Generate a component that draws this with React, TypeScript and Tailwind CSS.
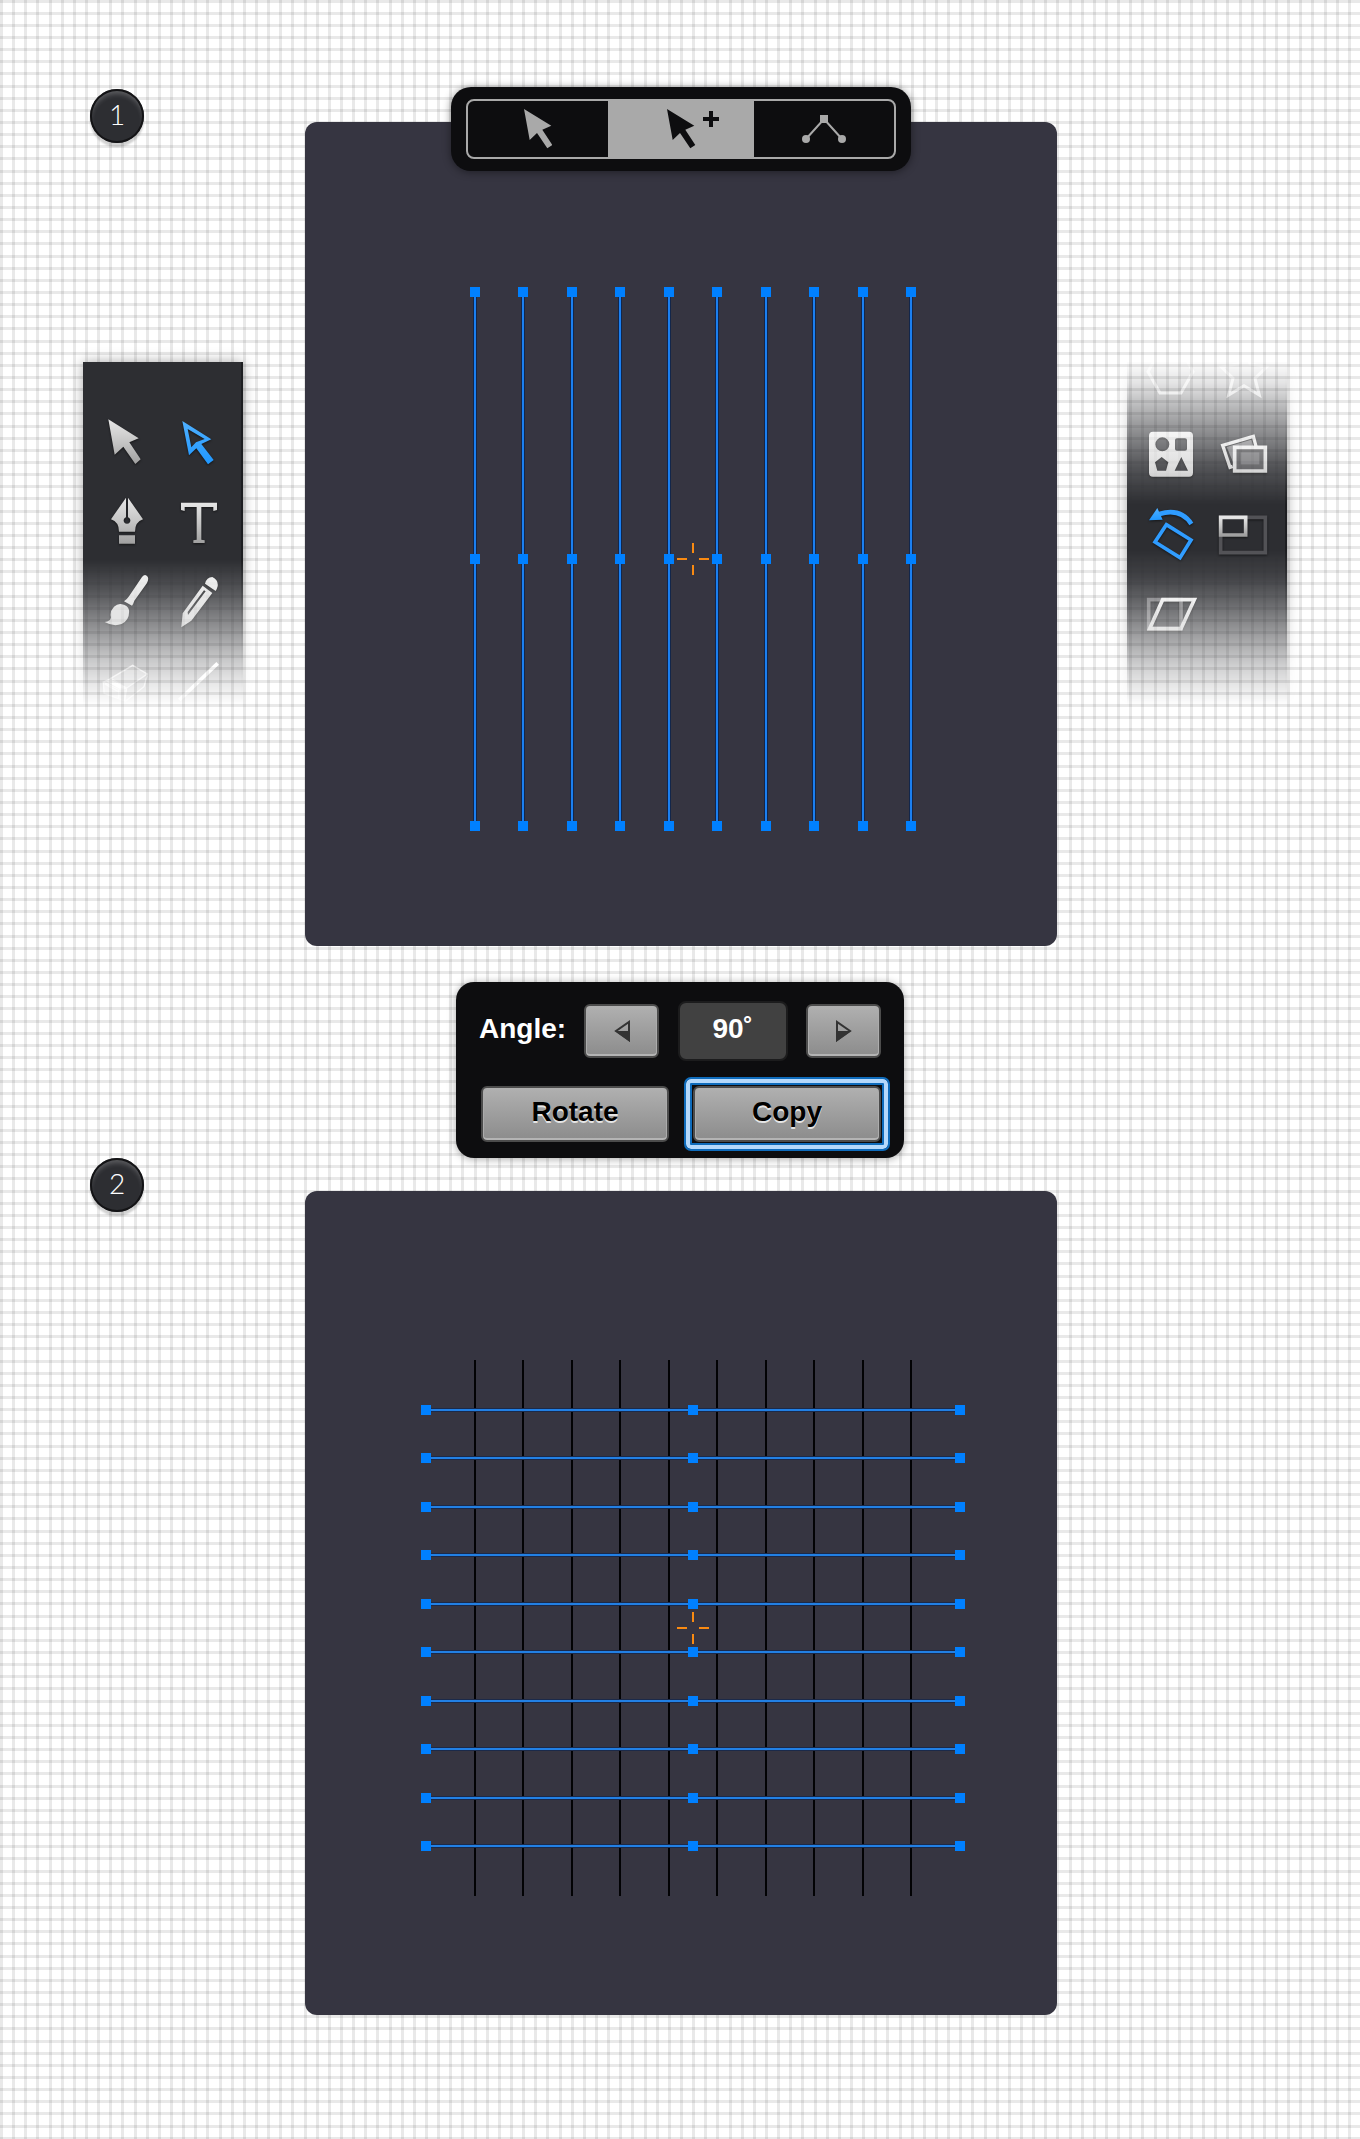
import React from "react";

const GREY = "url(#metal)";
const BLUE = "url(#azure)";

/* Evenly spaced strokes of the artwork, relative to a 752 x 824 artboard. */
const CENTER = { x: 388, y: 437 };
const OFFSETS = [-218, -170, -121, -73, -24, 24, 73, 121, 170, 218];
const HALF = 267;

function SharedGradients() {
  return (
    <svg width="0" height="0" className="absolute" aria-hidden="true">
      <defs>
        <linearGradient id="metal" x1="0" y1="0" x2="0" y2="1">
          <stop offset="0" stopColor="#e6e6e6" />
          <stop offset="0.5" stopColor="#c6c6c6" />
          <stop offset="1" stopColor="#a0a0a0" />
        </linearGradient>
        <linearGradient id="silver" x1="0" y1="0" x2="0" y2="1">
          <stop offset="0" stopColor="#ededed" />
          <stop offset="1" stopColor="#cfcfcf" />
        </linearGradient>
        <linearGradient id="azure" x1="0" y1="0" x2="0" y2="1">
          <stop offset="0" stopColor="#4fb0ff" />
          <stop offset="1" stopColor="#1f97ff" />
        </linearGradient>
      </defs>
    </svg>
  );
}

function Tool({ label, viewBox, children }: { label: string; viewBox: string; children: React.ReactNode }) {
  return (
    <button type="button" aria-label={label} className="block h-20">
      <svg
        viewBox={viewBox}
        className="h-20 w-[74px] drop-shadow-[0_1px_1px_rgba(0,0,0,0.55)]"
        fill="none"
        aria-hidden="true"
      >
        {children}
      </svg>
    </button>
  );
}

function LeftTools() {
  return (
    <aside
      aria-label="Drawing tools"
      className="w-48 px-4 pt-4 [mask-image:linear-gradient(to_bottom,#000_214px,rgba(0,0,0,.82)_244px,rgba(0,0,0,.58)_274px,rgba(0,0,0,.42)_294px,rgba(0,0,0,.26)_314px,rgba(0,0,0,.13)_334px,transparent_360px)]"
    >
      <div className="h-[344px] bg-[#2d2e32] shadow-[0_0_12px_rgba(0,0,0,0.35),inset_-2px_0_0_#1d1e21]">
        <div className="grid h-full grid-cols-[74px_74px] content-start overflow-hidden pt-10 pl-1">
          <Tool label="Selection" viewBox="51 156 222 240">
            <path fill={GREY} d="M115 208L206 265L178 277L212 328L196 342L160 290L134 314Z" />
          </Tool>
          <Tool label="Direct selection" viewBox="273 156 222 240">
            <path
              fill={BLUE}
              fillRule="evenodd"
              d="M337 213L424 268L394 282L431 330L414 343L379 295L357 316ZM353 237L404 267L378 277L364 292Z"
            />
          </Tool>
          <Tool label="Pen" viewBox="21 -24 222 240">
            <path
              fill={GREY}
              d="M138 23V82A10 10 0 1 0 144 82V23L189 88Q165 96 165 125H117Q117 96 93 88ZM117 136H165V161H117Z"
            />
          </Tool>
          <Tool label="Text" viewBox="243 -24 222 240">
            <path fill={GREY} d="M303 38H411V60L400 63V51H364V149L374 151V159H340V151L350 149V51H314V63L303 60Z" />
          </Tool>
          <Tool label="Brush" viewBox="51 96 222 240">
            <path
              fill="url(#silver)"
              d="M216 141Q225 130 233 140Q237 147 231 159L193 212Q190 222 186 227L162 214Q172 207 177 199ZM152 222Q174 225 177 240Q180 270 155 282Q130 291 104 276Q121 275 123 262Q118 245 132 230Q142 221 152 222Z"
            />
          </Tool>
          <Tool label="Pencil" viewBox="273 96 222 240">
            <path
              fill="url(#silver)"
              fillRule="evenodd"
              d="M405 161Q410 141 427 141Q446 150 443 169Q440 180 437 183ZM398 167L427 189L364 272L334 292L338 250ZM402 181L353 246L354 255L407 184Z"
            />
          </Tool>
          <Tool label="Eraser" viewBox="51 336 222 240">
            <path fill="#fff" fillOpacity="0.5" d="M99 455L120 447L170 476L166 514L102 490Z" />
            <path fill="#fff" fillOpacity="0.35" d="M122 445L188 406L232 432L170 472Z" />
            <path stroke="#fff" strokeOpacity="0.7" strokeWidth="4" d="M122 445L188 406L232 432L170 474ZM100 456L102 490L166 514L222 470L232 436M120 447L100 456L146 478L170 474L164 512M146 478L146 506M104 462L144 484" />
            <path fill="#fff" d="M108 454L124 449L168 472L148 476Z" />
          </Tool>
          <Tool label="Knife" viewBox="273 336 222 240">
            <path stroke="#fff" strokeWidth="11" d="M328 510L443 400" />
          </Tool>
        </div>
      </div>
    </aside>
  );
}

function RightTools() {
  return (
    <aside
      aria-label="Transform tools"
      className="w-48 px-4 pt-4 [mask-image:linear-gradient(to_bottom,transparent_14px,rgba(0,0,0,.13)_37px,rgba(0,0,0,.28)_54px,rgba(0,0,0,.55)_87px,rgba(0,0,0,.82)_121px,#000_158px,#000_204px,rgba(0,0,0,.9)_231px,rgba(0,0,0,.74)_254px,rgba(0,0,0,.48)_287px,rgba(0,0,0,.22)_321px,transparent_360px)]"
    >
      <div className="h-[344px] bg-[#2d2e32] shadow-[0_0_12px_rgba(0,0,0,0.35),inset_-2px_0_0_#1d1e21]">
        <div className="h-full overflow-hidden pl-[7px]">
          <div className="-mt-7 grid grid-cols-[74px_74px] content-start">
            <Tool label="Polygon" viewBox="72 -47 222 240">
              <path stroke="#fff" strokeOpacity="0.7" strokeWidth="9" d="M150 0L114 66L150 130H213L249 66L213 0Z" />
            </Tool>
            <Tool label="Star" viewBox="294 -47 222 240">
              <path stroke="#fff" strokeOpacity="0.7" strokeWidth="9" d="M402 -20L420 42L470 52L435 86L448 136L402 108L356 136L369 86L334 52L384 42Z" />
            </Tool>
            <Tool label="Shapes" viewBox="72 193 222 240">
              <path
                fill="url(#silver)"
                fillRule="evenodd"
                d="M129 246H237Q249 246 249 258V369Q249 381 237 381H129Q117 381 117 369V258Q117 246 129 246ZM136 284A21 21 0 1 0 178 284A21 21 0 1 0 136 284ZM201 266Q195 266 195 272V297Q195 303 201 303H225Q231 303 231 297V272Q231 266 225 266ZM155 322L135 338L142 363H168L175 338ZM214 322L194 363H234Z"
              />
            </Tool>
            <Tool label="Images" viewBox="294 193 222 240">
              <path fill="#77777a" d="M350 292L424 270L430 290H370V340Z" />
              <path stroke="url(#silver)" strokeWidth="10" d="M368 350L360 353L338 287L430 260L438 290" />
              <path fill="#4b4b4e" stroke="url(#silver)" strokeWidth="11" d="M374 293H466V364H374Z" />
              <path fill="#6e6e71" d="M392 308H448V344H392Z" />
            </Tool>
            <Tool label="Rotate tool" viewBox="72 433 222 240">
              <path stroke="#2f9cff" strokeWidth="14" d="M244 523Q212 474 148 493" />
              <path fill={BLUE} d="M117 512L142 475L158 510Z" />
              <path stroke="#2f9cff" strokeWidth="11" d="M169 525L243 571L210 624L135 577Z" />
            </Tool>
            <Tool label="Scale" viewBox="294 433 222 240">
              <path stroke="#525256" strokeWidth="11" d="M332 503H466V609H332Z" />
              <path fill="#2b2c30" stroke={GREY} strokeWidth="11" d="M332 503H407V556H332Z" />
            </Tool>
            <Tool label="Shear" viewBox="72 673 222 240">
              <path stroke="#747477" strokeWidth="11" d="M116 750H213V837H116Z" />
              <path stroke="url(#silver)" strokeWidth="11" d="M158 750H253L213 837H119Z" />
            </Tool>
          </div>
        </div>
      </div>
    </aside>
  );
}

const ARROW = "M0 0L27.3 16.7L18.3 20.7L28.3 36L23.3 39.3L13 24L5.7 31Z";

function ModeBar() {
  return (
    <div className="absolute -top-[35px] left-1/2 h-[84px] w-[460px] -translate-x-1/2 rounded-[20px] bg-[#0d0d0f] px-[15px] py-3 shadow-[0_1px_8px_rgba(0,0,0,0.45)]">
      <div role="group" aria-label="Selection mode" className="flex h-full overflow-hidden rounded-lg border-2 border-[#a9a9a9]">
        <button type="button" aria-label="Select" className="flex flex-1 items-center justify-center">
          <svg viewBox="0 0 28 40" className="h-10 w-7" fill="#a9a9a9" aria-hidden="true">
            <path d={ARROW} />
          </svg>
        </button>
        <button
          type="button"
          aria-label="Add to selection"
          aria-pressed="true"
          className="flex w-[146px] items-center justify-center bg-[#a9a9a9]"
        >
          <svg viewBox="0 0 80 40" className="h-10 w-20" fill="#0d0d0f" aria-hidden="true">
            <path transform="translate(26 0)" d={ARROW} />
            <path d="M68 2h4v6h6v4h-6v6h-4v-6h-6v-4h6z" />
          </svg>
        </button>
        <button type="button" aria-label="Edit anchor points" className="flex flex-1 items-center justify-center">
          <svg viewBox="0 0 44 28" className="h-7 w-11" fill="#a9a9a9" aria-hidden="true">
            <path d="M4 24L22 4L40 24" fill="none" stroke="#a9a9a9" strokeWidth="2" />
            <rect x="18" y="0" width="8" height="8" />
            <circle cx="4" cy="24" r="4" />
            <circle cx="40" cy="24" r="4" />
          </svg>
        </button>
      </div>
    </div>
  );
}

function Anchor({ x, y }: { x: number; y: number }) {
  return <rect x={x - 5} y={y - 5} width="10" height="10" fill="#0080ff" />;
}

function Artwork({ rotated }: { rotated: boolean }) {
  const { x: cx, y: cy } = CENTER;
  return (
    <svg viewBox="0 0 752 824" className="block w-full" shapeRendering="crispEdges" role="img" aria-label={rotated ? "Grid of lines" : "Vertical lines"}>
      {OFFSETS.map((o) => (
        <g key={o}>
          {rotated ? (
            <rect x={cx + o - 1} y={cy - HALF - 1} width="2" height={HALF * 2 + 2} fill="#020204" />
          ) : (
            <>
              <rect x={cx + o - 2} y={cy - HALF} width="4" height={HALF * 2} fill="#13264a" />
              <rect x={cx + o - 1} y={cy - HALF} width="2" height={HALF * 2} fill="#1b7ff0" />
              <Anchor x={cx + o} y={cy - HALF} />
              <Anchor x={cx + o} y={cy} />
              <Anchor x={cx + o} y={cy + HALF} />
            </>
          )}
        </g>
      ))}
      {rotated &&
        OFFSETS.map((o) => (
          <g key={o}>
            <rect x={cx - HALF} y={cy + o - 2} width={HALF * 2} height="4" fill="#1b2a4a" />
            <rect x={cx - HALF} y={cy + o - 1} width={HALF * 2} height="2" fill="#2280e4" />
            <Anchor x={cx - HALF} y={cy + o} />
            <Anchor x={cx} y={cy + o} />
            <Anchor x={cx + HALF} y={cy + o} />
          </g>
        ))}
      <path
        stroke="#f98a12"
        strokeWidth="2"
        d={`M${cx} ${cy - 16}v10M${cx} ${cy + 6}v10M${cx - 16} ${cy}h10M${cx + 6} ${cy}h10`}
      />
    </svg>
  );
}

function Step({ number, rotated, children, left, right }: {
  number: number;
  rotated: boolean;
  children?: React.ReactNode;
  left?: React.ReactNode;
  right?: React.ReactNode;
}) {
  return (
    <section className="grid grid-cols-[305fr_752px_303fr]">
      <div>
        <div className="pl-[90px]">
          <h2 className="flex size-[54px] items-center justify-center rounded-full bg-[#2d2e32] pb-1 font-['Lato',sans-serif] text-[28px] leading-none font-light text-white shadow-[0_4px_2px_rgba(0,0,0,0.18),inset_0_0_0_2px_#141416,inset_0_5px_5px_rgba(255,255,255,0.22)]">
            {number}
          </h2>
        </div>
        {left}
      </div>
      <div className="relative mt-[33px] rounded-xl bg-[#363541]">
        <Artwork rotated={rotated} />
        {children}
      </div>
      <div>{right}</div>
    </section>
  );
}

const BUTTON =
  "flex items-center justify-center rounded-md border-2 border-[#4c4c4c] bg-linear-to-b from-[#b0b0b0] to-[#8c8c8c] shadow-[inset_0_-2px_0_#b4b4b4,inset_1px_0_0_#acacac,inset_-1px_0_0_#acacac]";
const LABEL = "pb-1 text-[28px] leading-8 font-bold text-black [text-shadow:0_2px_0_rgba(255,255,255,0.75)]";

function AngleDialog() {
  return (
    <form
      onSubmit={(e) => e.preventDefault()}
      className="mx-auto mt-9 w-[448px] rounded-[18px] bg-[#0d0d0f] px-[23px] pt-[19px] pb-4 shadow-[0_1px_8px_rgba(0,0,0,0.35)]"
    >
      <div className="flex items-center justify-between">
        <label htmlFor="angle" className="pb-1 text-[28px] leading-8 font-bold text-white">
          Angle:
        </label>
        <button type="button" aria-label="Decrease angle" className={`${BUTTON} h-[54px] w-[75px]`}>
          <svg viewBox="0 0 16 22" className="h-[22px] w-4" aria-hidden="true">
            <path d="M15 2V20L2 11Z" fill="none" stroke="#333" strokeWidth="2" />
            <path d="M1 11H16V22Z" fill="#333" />
          </svg>
        </button>
        <input
          id="angle"
          type="text"
          defaultValue="90˚"
          className="h-[60px] w-[110px] rounded-lg border-2 border-[#1c1c1d] bg-[#414141] pb-1 text-center text-[28px] font-bold text-white outline-none"
        />
        <button type="button" aria-label="Increase angle" className={`${BUTTON} h-[54px] w-[75px]`}>
          <svg viewBox="0 0 16 22" className="h-[22px] w-4" aria-hidden="true">
            <path d="M1 2V20L14 11Z" fill="none" stroke="#333" strokeWidth="2" />
            <path d="M15 11H0V22Z" fill="#333" />
          </svg>
        </button>
      </div>
      <div className="mt-[25px] flex gap-6 pl-0.5">
        <button type="button" className={`${BUTTON} ${LABEL} h-14 flex-1`}>
          Rotate
        </button>
        <button
          type="submit"
          className={`${BUTTON} ${LABEL} relative h-14 flex-1 before:absolute before:-inset-[11px] before:rounded-[7px] before:border-2 before:border-[#0f6cbc] before:shadow-[inset_0_0_0_4px_#b5d9fc,inset_0_0_0_6px_#0f6cbc] before:content-['']`}
        >
          Copy
        </button>
      </div>
    </form>
  );
}

export default function App() {
  return (
    <main className="min-h-screen bg-white bg-[image:repeating-linear-gradient(to_right,rgba(0,0,0,.085)_0_3px,transparent_3px_12px,rgba(0,0,0,.085)_12px_15px,transparent_15px_24px,rgba(0,0,0,.085)_24px_27px,transparent_27px_36px,rgba(0,0,0,.085)_36px_39px,transparent_39px_49px,rgba(0,0,0,.085)_49px_52px,transparent_52px_61px,rgba(0,0,0,.085)_61px_64px,transparent_64px_73px,rgba(0,0,0,.085)_73px_76px,transparent_76px_85px),repeating-linear-gradient(to_bottom,rgba(0,0,0,.085)_0_3px,transparent_3px_12px,rgba(0,0,0,.085)_12px_15px,transparent_15px_24px,rgba(0,0,0,.085)_24px_27px,transparent_27px_36px,rgba(0,0,0,.085)_36px_39px,transparent_39px_48px,rgba(0,0,0,.085)_48px_51px,transparent_51px_60px,rgba(0,0,0,.085)_60px_63px,transparent_63px_72px,rgba(0,0,0,.085)_72px_75px,transparent_75px_85px)] pt-[89px] pb-20 font-['Liberation_Sans',Arial,sans-serif]">
      <SharedGradients />
      <Step
        number={1}
        rotated={false}
        left={
          <div className="mt-[203px] pl-[67px]">
            <LeftTools />
          </div>
        }
        right={
          <div className="mt-[257px] flex justify-end pr-[57px]">
            <RightTools />
          </div>
        }
      >
        <ModeBar />
      </Step>
      <AngleDialog />
      <Step number={2} rotated />
    </main>
  );
}
